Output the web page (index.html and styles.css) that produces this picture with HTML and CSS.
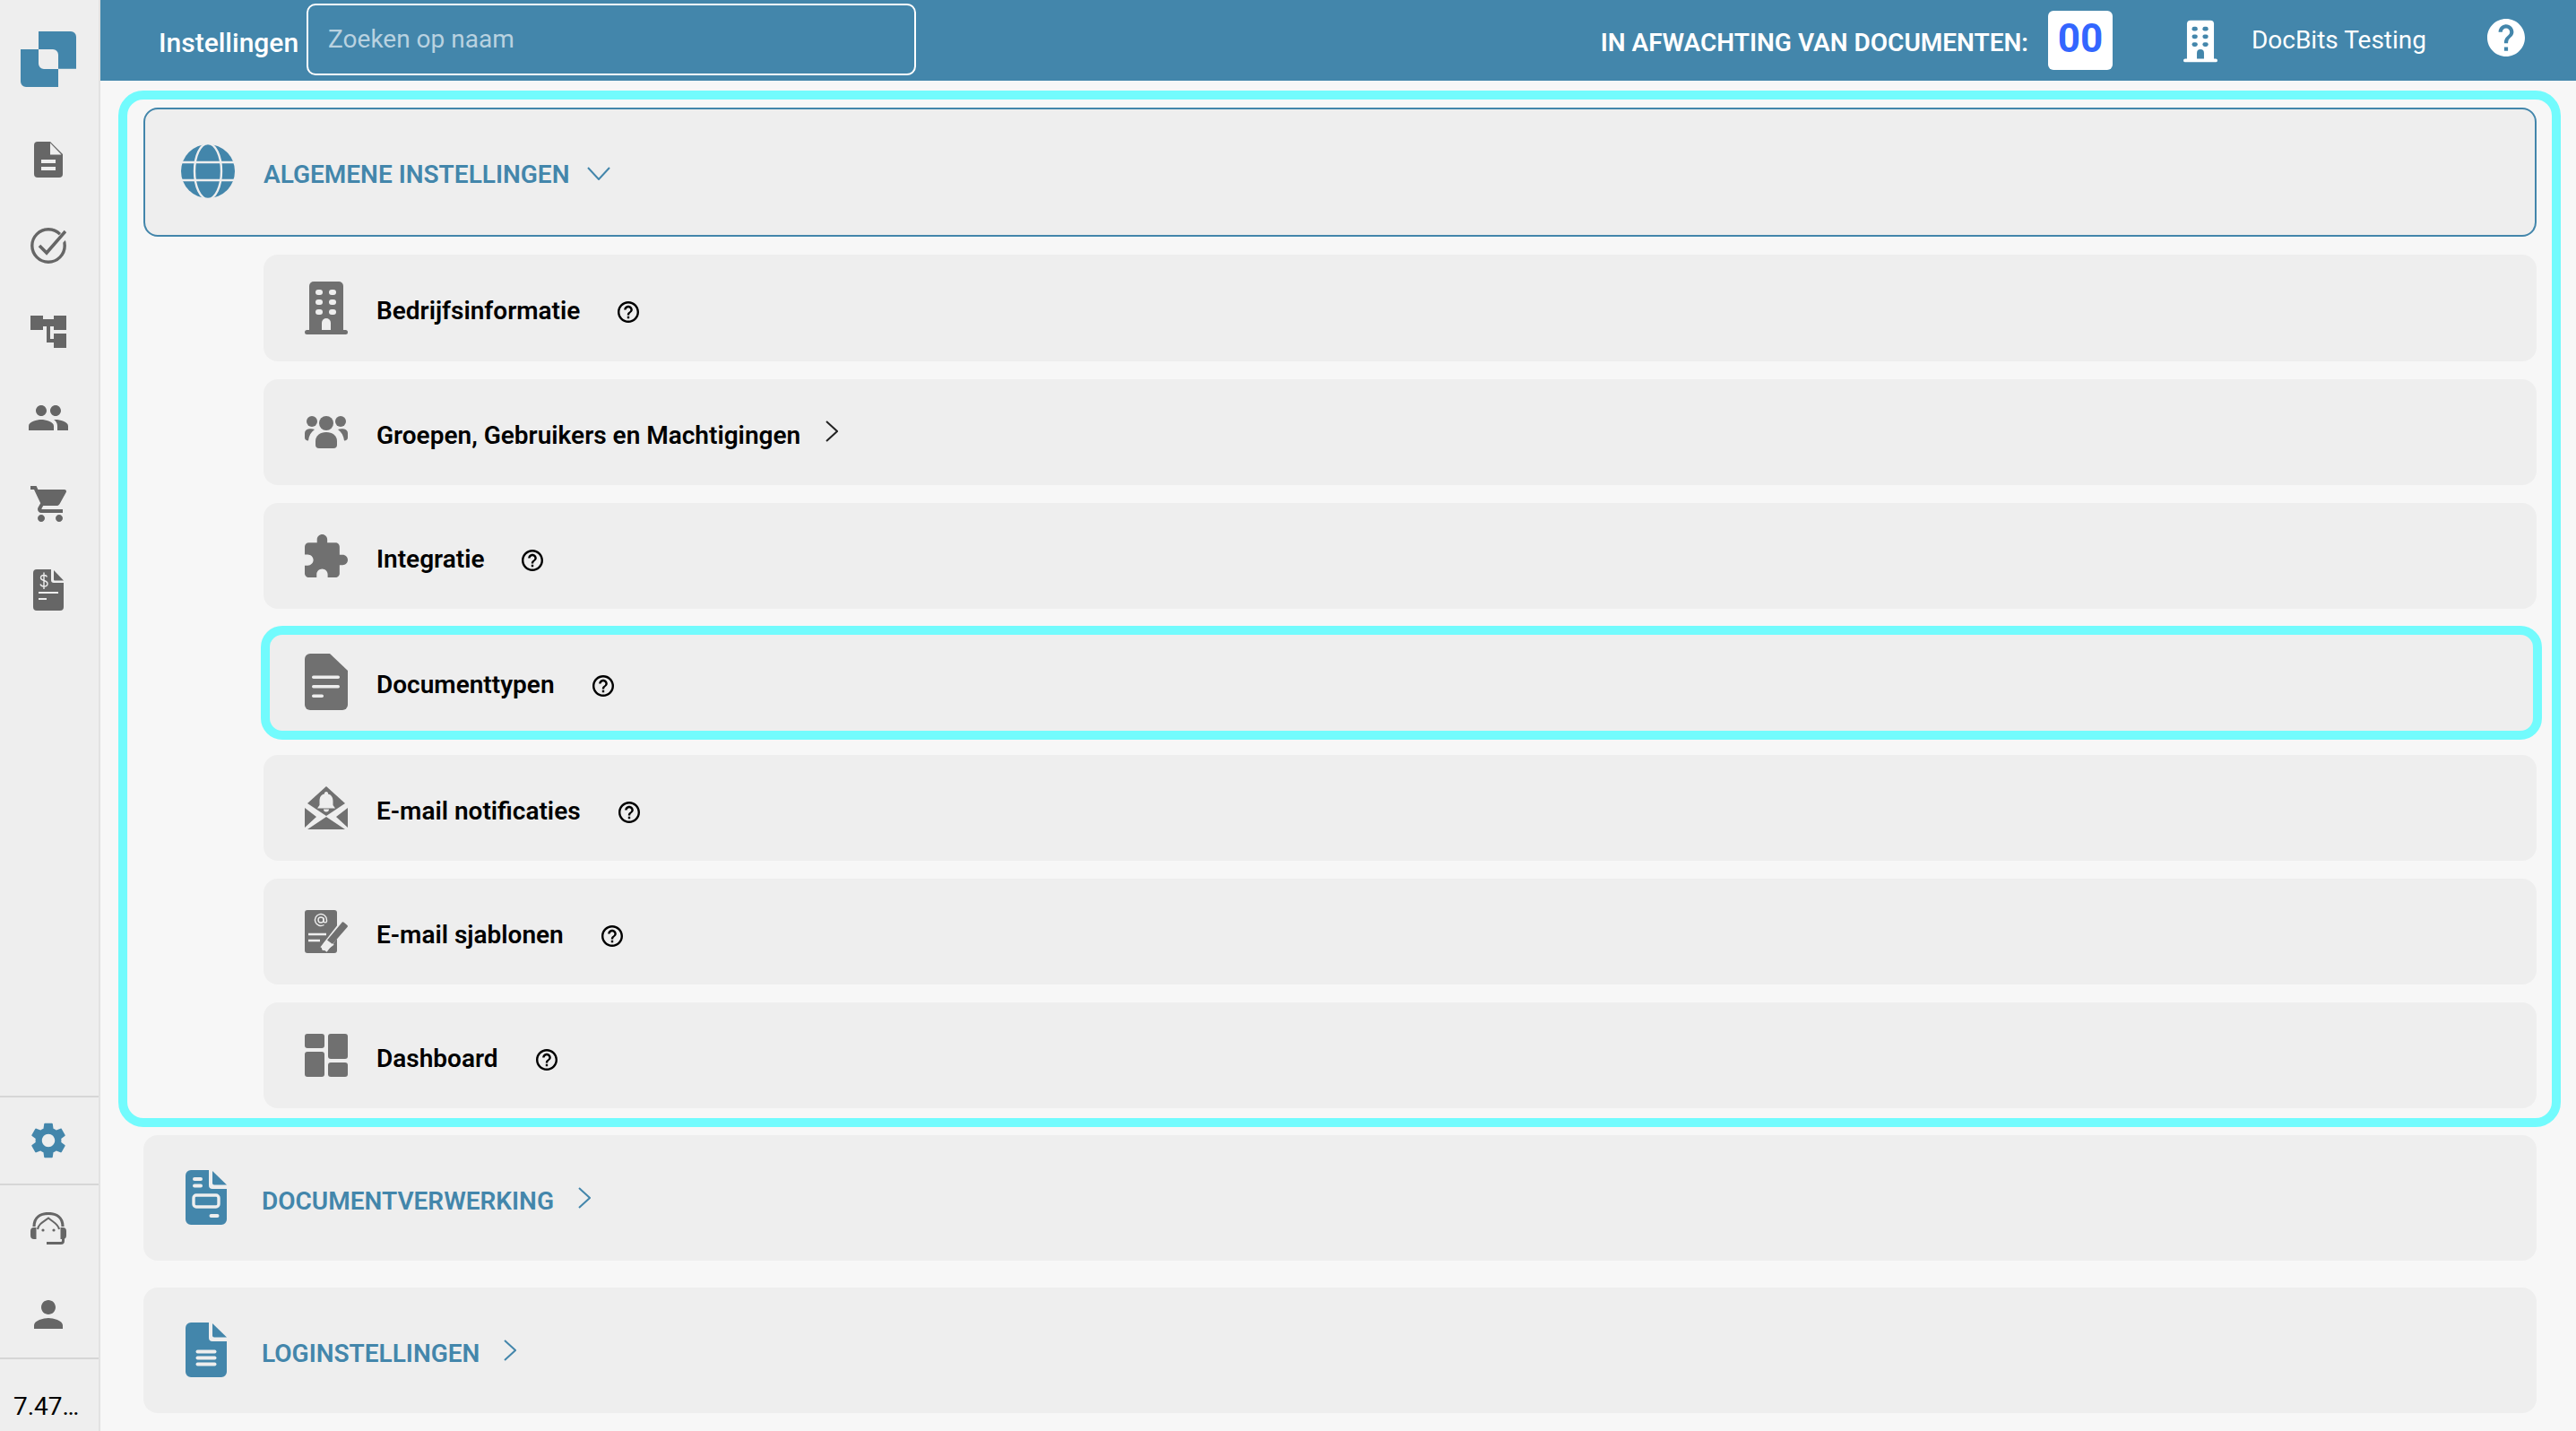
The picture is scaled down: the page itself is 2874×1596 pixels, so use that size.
FILE: index.html
```html
<!DOCTYPE html>
<html lang="nl">
<head>
<meta charset="utf-8">
<title>Instellingen</title>
<link rel="stylesheet" href="styles.css">
</head>
<body>
<div class="app">
  <aside class="sidebar">
    <div class="logo-wrap">
      <svg class="logo" viewBox="0 0 62 62"><path d="M20 0H56a6 6 0 0 1 6 6V41.7H42V26a6 6 0 0 0-6-6H20Z"/><path d="M0 20H20V36a6 6 0 0 0 6 6H42V62H6a6 6 0 0 1-6-6Z"/></svg>
    </div>
    <nav class="side-nav">
      <a class="side-item"><svg class="ic-32-40" viewBox="0 0 32 40"><path d="M4 0H18L32 14V36a4 4 0 0 1-4 4H4a4 4 0 0 1-4-4V4a4 4 0 0 1 4-4Z"/><path class="cut" d="M18 1.500L30.500 14.500H18ZM8 20H24V24H8ZM8 28H24V32H8Z"/></svg></a>
      <a class="side-item"><svg class="ic-40" viewBox="0 0 40 40"><circle class="line" cx="20" cy="20" r="18.200" stroke-width="3.400"/><path class="line-cut" d="M24 23L42 4" stroke-width="9"/><path class="line" d="M10 20L18 28L39 4" stroke-width="3.600"/></svg></a>
      <a class="side-item"><svg class="ic-40-36" viewBox="0 0 40 36"><path d="M0 0H14V16H0ZM26 0H40V16H26ZM26 20H40V36H26ZM14 4H26V12H14Z"/><path d="M18 12H22V26H26V30H18Z"/></svg></a>
      <a class="side-item"><svg class="ic-44-28" viewBox="1 5 22 14"><path d="M16 11c1.660 0 2.990-1.340 2.990-3S17.660 5 16 5c-1.660 0-3 1.340-3 3s1.340 3 3 3zm-8 0c1.660 0 2.990-1.340 2.990-3S9.660 5 8 5C6.340 5 5 6.340 5 8s1.340 3 3 3zm0 2c-2.330 0-7 1.170-7 3.500V19h14v-2.500c0-2.330-4.670-3.500-7-3.500zm8 0c-.29 0-.62.02-.97.05 1.160.84 1.970 1.970 1.970 3.450V19h6v-2.500c0-2.330-4.670-3.500-7-3.500z"/></svg></a>
      <a class="side-item"><svg class="ic-40" viewBox="1 2 20 20"><path d="M7 18c-1.100 0-1.990.9-1.990 2S5.900 22 7 22s2-.9 2-2-.9-2-2-2zM1 2v2h2l3.600 7.590-1.350 2.450c-.16.28-.25.61-.25.96 0 1.100.9 2 2 2h12v-2H7.420c-.14 0-.25-.11-.25-.25l.03-.12.9-1.630h7.450c.75 0 1.410-.41 1.750-1.030l3.580-6.490c.08-.14.12-.31.12-.48 0-.55-.45-1-1-1H5.210l-.94-2H1zm16 16c-1.100 0-1.990.9-1.990 2s.89 2 1.990 2 2-.9 2-2-.9-2-2-2z"/></svg></a>
      <a class="side-item"><svg class="ic-34-46" viewBox="0 0 34 46"><path d="M4 0H20V12a3 3 0 0 0 3 3H34V42a4 4 0 0 1-4 4H4a4 4 0 0 1-4-4V4a4 4 0 0 1 4-4Z"/><path d="M23 1L34 12.500H24a1 1 0 0 1-1-1Z"/><path class="line-cut" d="M15.500 8.500c-.5-1.500-1.500-2-3.500-2-2 0-3.500 1-3.500 3 0 4 7.500 2 7.500 6.500 0 2-1.500 3-4 3-2 0-3.500-1-4-2.500M12 3.500V22" stroke-width="1.400"/><path class="line-cut" d="M6 26H28" stroke-width="2"/><path class="line-cut" d="M6 33H15" stroke-width="2"/></svg></a>
    </nav>
    <div class="side-bottom">
      <a class="side-item side-active"><svg class="ic-40" viewBox="2.600 2 18.800 20"><path d="M19.140 12.940c.04-.3.06-.61.06-.94 0-.32-.02-.64-.07-.94l2.030-1.580c.18-.14.23-.41.12-.61l-1.920-3.320c-.12-.22-.37-.29-.59-.22l-2.390.96c-.5-.38-1.030-.7-1.620-.94l-.36-2.540c-.04-.24-.24-.41-.48-.41h-3.840c-.24 0-.43.17-.47.41l-.36 2.540c-.59.24-1.130.57-1.620.94l-2.390-.96c-.22-.08-.47 0-.59.22L2.740 8.870c-.12.21-.08.47.12.61l2.030 1.580c-.05.3-.09.63-.09.94s.02.64.07.94l-2.030 1.580c-.18.14-.23.41-.12.61l1.920 3.320c.12.22.37.29.59.22l2.390-.96c.5.38 1.030.7 1.620.94l.36 2.540c.05.24.24.41.48.41h3.840c.24 0 .44-.17.47-.41l.36-2.540c.59-.24 1.130-.56 1.620-.94l2.390.96c.22.08.47 0 .59-.22l1.920-3.320c.12-.22.07-.47-.12-.61l-2.010-1.580zM12 15.600c-1.980 0-3.600-1.620-3.600-3.600s1.620-3.600 3.600-3.600 3.600 1.620 3.600 3.600-1.620 3.600-3.600 3.600z"/></svg></a>
      <a class="side-item side-bordered"><svg class="ic-40-36" viewBox="0 0 40 36"><path class="line" d="M4 16C4 6 11 1.500 20 1.500S36 6 36 16" stroke-width="3.200"/><path d="M0 21a4 4 0 0 1 4-4h2.500V30H4a4 4 0 0 1-4-4ZM40 21a4 4 0 0 0-4-4h-2.500V30H36a4 4 0 0 0 4-4Z"/><path class="line" d="M8 19C9 13 14 11 20 6.500C25 11 31 13 32 19" stroke-width="2"/><circle cx="14" cy="20" r="1.600"/><circle cx="26" cy="20" r="1.600"/><path class="line" d="M36.500 28V32a2.500 2.500 0 0 1-2.500 2.500H18" stroke-width="3"/></svg></a>
      <a class="side-item"><svg class="ic-32" viewBox="4 4 16 16"><path d="M12 12c2.210 0 4-1.790 4-4s-1.790-4-4-4-4 1.790-4 4 1.790 4 4 4zm0 2c-2.670 0-8 1.340-8 4v2h16v-2c0-2.660-5.330-4-8-4z"/></svg></a>
      <div class="version">7.47…</div>
    </div>
  </aside>

  <div class="content">
    <header class="topbar">
      <span class="page-title">Instellingen</span>
      <div class="search">Zoeken op naam</div>
      <div class="top-right">
        <span class="pending-label">IN AFWACHTING VAN DOCUMENTEN:</span>
        <span class="pending-count">00</span>
        <svg class="ic-top-building" viewBox="0 0 48 59"><path d="M10 0H38a5 5 0 0 1 5 5V55H5V5a5 5 0 0 1 5-5Z"/><rect y="54" width="48" height="5" rx="2.500"/><g class="cut"><rect x="12" y="9" width="8" height="6" rx="3"/><rect x="27" y="9" width="8" height="6" rx="3"/><rect x="12" y="20" width="8" height="6" rx="3"/><rect x="27" y="20" width="8" height="6" rx="3"/><rect x="12" y="31" width="8" height="6" rx="3"/><rect x="27" y="31" width="8" height="6" rx="3"/><path d="M19 54V46a5 5 0 0 1 10 0V54Z"/></g></svg>
        <span class="tenant">DocBits Testing</span>
        <svg class="ic-top-help" viewBox="2 2 20 20"><path d="M12 2C6.480 2 2 6.480 2 12s4.480 10 10 10 10-4.480 10-10S17.520 2 12 2zm1 17h-2v-2h2v2zm2.070-7.750l-.9.92C13.450 12.900 13 13.500 13 15h-2v-.5c0-1.100.45-2.100 1.170-2.830l1.240-1.260c.37-.36.59-.86.59-1.410 0-1.100-.9-2-2-2s-2 .9-2 2H8c0-2.210 1.790-4 4-4s4 1.790 4 4c0 .88-.36 1.680-.93 2.250z"/></svg>
      </div>
    </header>

    <main class="main">
      <section class="group">
        <div class="group-ring"></div>
        <div class="card card-open">
          <svg class="ic-globe" viewBox="0 0 60 60"><circle cx="30" cy="30" r="30"/><g class="line-cut" stroke-width="2.400"><path d="M0 20H60M0 40H60"/><ellipse cx="30" cy="30" rx="15" ry="31"/></g></svg>
          <span class="card-label">ALGEMENE INSTELLINGEN</span>
          <svg class="chev-down" viewBox="0 0 26 15"><path d="M1 1L13 14L25 1"/></svg>
        </div>
        <div class="rows">
          <a class="row row-first">
            <svg class="ic-row ic-h59" viewBox="0 0 48 59"><path d="M10 0H38a5 5 0 0 1 5 5V55H5V5a5 5 0 0 1 5-5Z"/><rect y="54" width="48" height="5" rx="2.500"/><g class="cut"><rect x="12" y="9" width="8" height="6" rx="3"/><rect x="27" y="9" width="8" height="6" rx="3"/><rect x="12" y="20" width="8" height="6" rx="3"/><rect x="27" y="20" width="8" height="6" rx="3"/><rect x="12" y="31" width="8" height="6" rx="3"/><rect x="27" y="31" width="8" height="6" rx="3"/><path d="M19 54V46a5 5 0 0 1 10 0V54Z"/></g></svg>
            <span class="row-label">Bedrijfsinformatie</span>
            <svg class="ic-help" viewBox="2 2 20 20"><path d="M11 18h2v-2h-2v2zm1-16C6.480 2 2 6.480 2 12s4.480 10 10 10 10-4.480 10-10S17.520 2 12 2zm0 18c-4.410 0-8-3.590-8-8s3.590-8 8-8 8 3.590 8 8-3.590 8-8 8zm0-14c-2.210 0-4 1.790-4 4h2c0-1.100.9-2 2-2s2 .9 2 2c0 2-3 1.750-3 5h2c0-2.250 3-2.500 3-5 0-2.210-1.790-4-4-4z"/></svg>
          </a>
          <a class="row">
            <svg class="ic-row ic-h36" viewBox="0 0 48 36"><circle cx="8" cy="6" r="6"/><circle cx="40" cy="6" r="6"/><circle cx="24" cy="8" r="8"/><path d="M24 18c7 0 12 4 12 10v4a4 4 0 0 1-4 4H16a4 4 0 0 1-4-4v-4c0-6 5-10 12-10Z"/><path d="M4 14.500c2-.5 5-.5 7 .5C7 18 4.500 22 4 27.500C1.500 27.500 0 26 0 24v-5c0-2.500 2-4 4-4.500ZM44 14.500c-2-.5-5-.5-7 .5c4 3 6.500 7 7 12.500c2.500 0 4-1.500 4-3.500v-5c0-2.500-2-4-4-4.500Z"/></svg>
            <span class="row-label">Groepen, Gebruikers en Machtigingen</span>
            <svg class="chev-right chev-row" viewBox="0 0 14 24"><path d="M1 1L13 12L1 23"/></svg>
          </a>
          <a class="row">
            <svg class="ic-row ic-h48" viewBox="2 1 21 21"><path d="M20.500 11H19V7c0-1.100-.9-2-2-2h-4V3.500C13 2.120 11.880 1 10.500 1S8 2.120 8 3.500V5H4c-1.100 0-1.990.9-1.990 2v3.800H3.500c1.490 0 2.700 1.210 2.700 2.700s-1.210 2.700-2.700 2.700H2V20c0 1.100.9 2 2 2h3.800v-1.500c0-1.490 1.210-2.700 2.700-2.700 1.490 0 2.700 1.210 2.700 2.700V22H17c1.100 0 2-.9 2-2v-4h1.500c1.380 0 2.500-1.120 2.500-2.500S21.880 11 20.500 11z"/></svg>
            <span class="row-label">Integratie</span>
            <svg class="ic-help" viewBox="2 2 20 20"><path d="M11 18h2v-2h-2v2zm1-16C6.480 2 2 6.480 2 12s4.480 10 10 10 10-4.480 10-10S17.520 2 12 2zm0 18c-4.410 0-8-3.590-8-8s3.590-8 8-8 8 3.590 8 8-3.590 8-8 8zm0-14c-2.210 0-4 1.790-4 4h2c0-1.100.9-2 2-2s2 .9 2 2c0 2-3 1.750-3 5h2c0-2.250 3-2.500 3-5 0-2.210-1.790-4-4-4z"/></svg>
          </a>
          <a class="row row-marked">
            <svg class="ic-row ic-h63" viewBox="0 0 48 63"><path d="M6 0H28L48 19V57a6 6 0 0 1-6 6H6a6 6 0 0 1-6-6V6a6 6 0 0 1 6-6Z"/><g class="cut"><rect x="8" y="24.500" width="31" height="3.500" rx="1.700"/><rect x="8" y="35" width="31" height="3.500" rx="1.700"/><rect x="8" y="45.500" width="13" height="3.500" rx="1.700"/></g></svg>
            <span class="row-label">Documenttypen</span>
            <svg class="ic-help" viewBox="2 2 20 20"><path d="M11 18h2v-2h-2v2zm1-16C6.480 2 2 6.480 2 12s4.480 10 10 10 10-4.480 10-10S17.520 2 12 2zm0 18c-4.410 0-8-3.590-8-8s3.590-8 8-8 8 3.590 8 8-3.590 8-8 8zm0-14c-2.210 0-4 1.790-4 4h2c0-1.100.9-2 2-2s2 .9 2 2c0 2-3 1.750-3 5h2c0-2.250 3-2.500 3-5 0-2.210-1.790-4-4-4z"/></svg>
            <span class="row-ring"></span>
          </a>
          <a class="row">
            <svg class="ic-row ic-h48" viewBox="0 0 48 48"><path d="M24 0L45 19L24 33L3 19Z"/><path d="M0 24L13 34L0 46ZM48 24L35 34L48 46ZM3 48L24 34L45 48Z"/><path class="cut" d="M24 6a2 2 0 0 1 2 2.500c4 1 5.500 4 5.500 8V21l2.500 3.500H14L16.500 21V16.500c0-4 1.500-7.500 5.500-8A2 2 0 0 1 24 6ZM21 25.500h6a3 3 0 0 1-6 0Z"/></svg>
            <span class="row-label">E-mail notificaties</span>
            <svg class="ic-help" viewBox="2 2 20 20"><path d="M11 18h2v-2h-2v2zm1-16C6.480 2 2 6.480 2 12s4.480 10 10 10 10-4.480 10-10S17.520 2 12 2zm0 18c-4.410 0-8-3.590-8-8s3.590-8 8-8 8 3.590 8 8-3.590 8-8 8zm0-14c-2.210 0-4 1.790-4 4h2c0-1.100.9-2 2-2s2 .9 2 2c0 2-3 1.750-3 5h2c0-2.250 3-2.500 3-5 0-2.210-1.790-4-4-4z"/></svg>
          </a>
          <a class="row">
            <svg class="ic-row ic-h48" viewBox="0 0 48 48"><rect width="36" height="48" rx="3"/><g class="line-cut" stroke-width="1.400"><circle cx="18" cy="11" r="3"/><path d="M21 8.500V12.500a1.800 1.800 0 0 0 3.500 0V11a6.500 6.500 0 1 0-3 5.500"/></g><path class="line-cut" d="M4 27H24M4 34H17" stroke-width="2.500"/><path class="line-cut" d="M42 17L21 44" stroke-width="9"/><path d="M44 14l3.500 3a1.500 1.500 0 0 1 0 2L31 38l-6-4.500L41 14.500a2 2 0 0 1 3-.5Z"/><path class="line-cut" d="M25 34c-3 3-5 7-5 9s3 1 6-.5L32 38" stroke-width="2"/></svg>
            <span class="row-label">E-mail sjablonen</span>
            <svg class="ic-help" viewBox="2 2 20 20"><path d="M11 18h2v-2h-2v2zm1-16C6.480 2 2 6.480 2 12s4.480 10 10 10 10-4.480 10-10S17.520 2 12 2zm0 18c-4.410 0-8-3.590-8-8s3.590-8 8-8 8 3.590 8 8-3.590 8-8 8zm0-14c-2.210 0-4 1.790-4 4h2c0-1.100.9-2 2-2s2 .9 2 2c0 2-3 1.750-3 5h2c0-2.250 3-2.500 3-5 0-2.210-1.790-4-4-4z"/></svg>
          </a>
          <a class="row">
            <svg class="ic-row ic-h48" viewBox="0 0 48 48"><rect width="22" height="16" rx="3"/><rect y="20" width="22" height="28" rx="3"/><rect x="26" width="22" height="28" rx="3"/><rect x="26" y="32" width="22" height="16" rx="3"/></svg>
            <span class="row-label">Dashboard</span>
            <svg class="ic-help" viewBox="2 2 20 20"><path d="M11 18h2v-2h-2v2zm1-16C6.480 2 2 6.480 2 12s4.480 10 10 10 10-4.480 10-10S17.520 2 12 2zm0 18c-4.410 0-8-3.590-8-8s3.590-8 8-8 8 3.590 8 8-3.590 8-8 8zm0-14c-2.210 0-4 1.790-4 4h2c0-1.100.9-2 2-2s2 .9 2 2c0 2-3 1.750-3 5h2c0-2.250 3-2.500 3-5 0-2.210-1.790-4-4-4z"/></svg>
          </a>
        </div>
      </section>

      <div class="card card-closed">
        <svg class="ic-blue" viewBox="0 0 46 61"><path d="M6 0H26V17a4 4 0 0 0 4 4H46V55a6 6 0 0 1-6 6H6a6 6 0 0 1-6-6V6a6 6 0 0 1 6-6Z"/><path d="M30 1L46 16.500H32a2 2 0 0 1-2-2Z"/><g class="cut"><rect x="8" y="8" width="11" height="4" rx="2"/><rect x="8" y="15.500" width="11" height="4" rx="2"/><rect x="26.500" y="49" width="11" height="4" rx="2"/></g><rect class="line-cut" x="9" y="28" width="28" height="13" rx="3" stroke-width="3.400"/></svg>
        <span class="card-label">DOCUMENTVERWERKING</span>
        <svg class="chev-right chev-card" viewBox="0 0 14 24"><path d="M1 1L13 12L1 23"/></svg>
      </div>
      <div class="card card-closed">
        <svg class="ic-blue" viewBox="0 0 46 61"><path d="M6 0H26V17a4 4 0 0 0 4 4H46V55a6 6 0 0 1-6 6H6a6 6 0 0 1-6-6V6a6 6 0 0 1 6-6Z"/><path d="M30 1L46 16.500H32a2 2 0 0 1-2-2Z"/><g class="cut"><rect x="11.500" y="30.500" width="23" height="4" rx="2"/><rect x="11.500" y="37.500" width="23" height="4" rx="2"/><rect x="11.500" y="44.500" width="23" height="4" rx="2"/></g></svg>
        <span class="card-label">LOGINSTELLINGEN</span>
        <svg class="chev-right chev-card" viewBox="0 0 14 24"><path d="M1 1L13 12L1 23"/></svg>
      </div>
    </main>
  </div>
</div>
</body>
</html>
```

FILE: styles.css
```css
* { box-sizing: border-box; }
html, body { margin: 0; height: 100%; }
body {
  font-family: Roboto, "Liberation Sans", sans-serif;
  background: #f7f7f7;
  color: #000;
  overflow: hidden;
}
svg { display: block; flex: none; }
.cut { fill: var(--cut, #eee); }
.line { fill: none; stroke: currentColor; }
.line-cut { fill: none; stroke: var(--cut, #eee); }

.app { display: flex; height: 1596px; }

/* Sidebar */
.sidebar {
  width: 112px;
  flex: none;
  background: #eee;
  border-right: 2px solid #e2e2e2;
  display: flex;
  flex-direction: column;
  color: #666;
  fill: #666;
}
.logo-wrap { height: 130px; padding: 35px 0 0 23px; }
.logo { width: 62px; height: 62px; fill: #4386ab; }
.side-nav { display: flex; flex-direction: column; }
.side-item { height: 96px; display: flex; align-items: center; justify-content: center; padding-right: 2px; }
.side-bottom { margin-top: auto; display: flex; flex-direction: column; }
.side-active {
  fill: #4386ab;
  border-top: 2px solid #d6d6d6;
  border-bottom: 2px solid #d6d6d6;
  height: 100px;
}
.side-bordered { height: 96px; }
.version {
  border-top: 2px solid #d6d6d6;
  height: 82px;
  padding: 36px 0 0 15px;
  font-size: 28px;
  line-height: 33px;
  color: #000;
}
.ic-32-40 { width: 32px; height: 40px; }
.ic-40 { width: 40px; height: 40px; }
.ic-40-36 { width: 40px; height: 36px; }
.ic-44-28 { width: 44px; height: 28px; }
.ic-34-46 { width: 34px; height: 46px; }
.ic-32 { width: 32px; height: 32px; }

/* Top bar */
.content { flex: 1; min-width: 0; display: flex; flex-direction: column; }
.topbar {
  height: 90px;
  flex: none;
  background: #4386ab;
  display: flex;
  align-items: center;
  padding: 0 57px 0 65px;
  color: #fff;
  --cut: #4386ab;
}
.page-title { font-size: 30px; font-weight: 500; line-height: 35px; padding-top: 4px; }
.search {
  width: 680px;
  height: 80px;
  margin: -3px 0 0 9px;
  border: 2px solid #fff;
  border-radius: 10px;
  padding: 0 0 0 22px;
  display: flex;
  align-items: center;
  font-size: 28px;
  color: #b9d2e0;
}
.top-right { margin-left: auto; display: flex; align-items: center; fill: #fff; }
.pending-label { font-size: 28px; font-weight: 600; padding-top: 5px; }
.pending-count {
  width: 72px;
  height: 66px;
  margin: -1px 0 0 22px;
  background: #fff;
  border-radius: 6px;
  color: #3366ff;
  font-size: 44px;
  font-weight: 700;
  display: flex;
  align-items: center;
  justify-content: center;
  padding-bottom: 4px;
}
.ic-top-building { width: 38px; height: 48px; margin: 2px 0 0 79px; }
.tenant { font-size: 28px; margin-left: 38px; padding-bottom: 1px; }
.ic-top-help { width: 42px; height: 42px; margin: -6px 0 0 68px; }

/* Main */
.main { flex: 1; padding: 30px 44px 0 48px; display: flex; flex-direction: column; gap: 30px; }
.group { position: relative; }
.group-ring {
  position: absolute;
  inset: -19px -27px -21px -28px;
  border: 10px solid #72fbfd;
  border-radius: 28px;
  pointer-events: none;
}
.card {
  display: flex;
  align-items: center;
  background: #eee;
  border-radius: 16px;
  color: #4386ab;
  fill: #4386ab;
}
.card-open { height: 144px; border: 2px solid #4386ab; padding-left: 40px; padding-bottom: 2px; }
.card-closed { height: 140px; padding-left: 47px; padding-bottom: 2px; }
.card-label { font-size: 28px; font-weight: 600; line-height: 33px; }
.card-open .card-label { margin-left: 32px; padding-top: 7px; }
.card-closed .card-label { margin-left: 39px; padding-top: 9px; }
.ic-globe { width: 60px; height: 60px; }
.chev-down { width: 26px; height: 15px; margin: 4px 0 0 20px; fill: none; stroke: #4386ab; stroke-width: 2; }
.chev-right { fill: none; stroke: currentColor; stroke-width: 2; width: 14px; height: 24px; }
.chev-card { margin: 2px 0 0 27px; }
.chev-row { margin: -2px 0 0 28px; color: #222; }
.ic-blue { width: 46px; height: 61px; }

.rows { display: flex; flex-direction: column; gap: 20px; margin: 20px 0 0 134px; }
.row {
  position: relative;
  height: 118px;
  background: #eee;
  border-radius: 16px;
  display: flex;
  align-items: center;
  padding-left: 46px;
  fill: #707070;
}
.row-first { height: 119px; }
.row-marked { margin-bottom: 5px; }
.row-ring {
  position: absolute;
  inset: -1px -6px -8px -3px;
  border: 10px solid #72fbfd;
  border-radius: 24px;
  pointer-events: none;
}
.ic-row { width: 48px; }
.ic-h36 { height: 36px; }
.ic-h48 { height: 48px; }
.ic-h59 { height: 59px; }
.ic-h63 { height: 63px; margin-top: 4px; }
.row-label { font-size: 28px; font-weight: 600; line-height: 33px; margin-left: 32px; padding-top: 6px; }
.ic-help { width: 24px; height: 24px; margin: 9px 0 0 42px; fill: #000; }
.row-marked .row-label { padding-top: 10px; }
.row-marked .ic-help { margin-top: 13px; }
```
